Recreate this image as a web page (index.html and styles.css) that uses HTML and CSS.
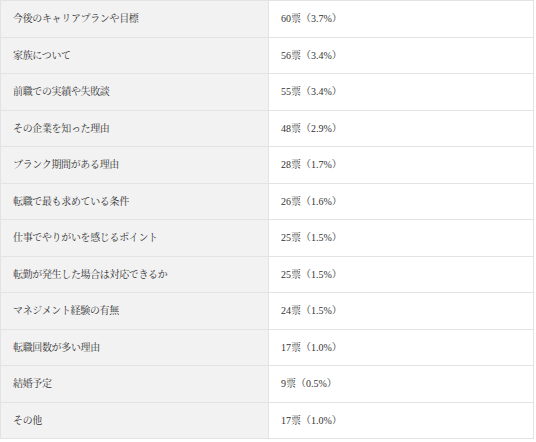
FILE: index.html
```html
<!DOCTYPE html>
<html lang="ja">
<head>
<meta charset="utf-8">
<link rel="stylesheet" href="styles.css">
</head>
<body>
<table class="votes">
  <tbody>
    <tr><th>今後のキャリアプランや目標</th><td>60票（3.7%）</td></tr>
    <tr><th>家族について</th><td>56票（3.4%）</td></tr>
    <tr><th>前職での実績や失敗談</th><td>55票（3.4%）</td></tr>
    <tr><th>その企業を知った理由</th><td>48票（2.9%）</td></tr>
    <tr><th>ブランク期間がある理由</th><td>28票（1.7%）</td></tr>
    <tr><th>転職で最も求めている条件</th><td>26票（1.6%）</td></tr>
    <tr><th>仕事でやりがいを感じるポイント</th><td>25票（1.5%）</td></tr>
    <tr><th>転勤が発生した場合は対応できるか</th><td>25票（1.5%）</td></tr>
    <tr><th>マネジメント経験の有無</th><td>24票（1.5%）</td></tr>
    <tr><th>転職回数が多い理由</th><td>17票（1.0%）</td></tr>
    <tr><th>結婚予定</th><td>9票（0.5%）</td></tr>
    <tr><th>その他</th><td>17票（1.0%）</td></tr>
  </tbody>
</table>
</body>
</html>
```
FILE: styles.css
```css
html, body {
  margin: 0;
  padding: 0;
  background: #ffffff;
}
.votes {
  border-collapse: collapse;
  width: 534px;
  table-layout: fixed;
  font-family: "Liberation Serif", "Noto Serif CJK JP", "Noto Sans CJK JP", serif;
  font-size: 10px;
  color: #333333;
}
.votes th,
.votes td {
  border: 1px solid #e3e3e3;
  height: 36.5px;
  box-sizing: border-box;
  padding: 0 12px;
  text-align: left;
  font-weight: normal;
  vertical-align: middle;
  line-height: 14px;
}
.votes th {
  width: 268px;
  background: #f2f2f2;
  letter-spacing: -0.35px;
  padding-top: 1px;
}
.votes td {
  background: #ffffff;
  padding-top: 1px;
}
```
